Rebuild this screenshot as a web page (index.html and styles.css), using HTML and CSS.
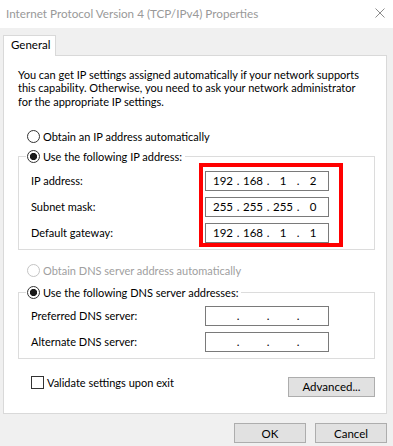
FILE: index.html
```html
<!DOCTYPE html>
<html>
<head>
<meta charset="utf-8">
<title>Internet Protocol Version 4 (TCP/IPv4) Properties</title>
<link rel="stylesheet" href="styles.css">
</head>
<body>
<div class="window">
  <header class="titlebar">
    <span class="title">Internet Protocol Version 4 (TCP/IPv4) Properties</span>
    <svg class="close" width="10" height="10" viewBox="0 0 10 10"><path d="M0.5 0.5L9.5 9.5M9.5 0.5L0.5 9.5" stroke="#8c8c8c" stroke-width="1" fill="none"/></svg>
  </header>
  <main class="content">
    <div class="tabs"><div class="tab">General</div></div>
    <section class="panel">
      <p class="intro">You can get IP settings assigned automatically if your network supports<br>this capability. Otherwise, you need to ask your network administrator<br>for the appropriate IP settings.</p>

      <div class="option"><span class="radio"></span><span>Obtain an IP address automatically</span></div>

      <fieldset class="group">
        <legend><span class="radio checked"></span><span>Use the following IP address:</span></legend>
        <div class="fields">
          <div class="row"><span class="label">IP address:</span>
            <div class="ipbox"><span class="oct">192</span><span class="dot">.</span><span class="oct">168</span><span class="dot">.</span><span class="oct">1</span><span class="dot">.</span><span class="oct">2</span></div></div>
          <div class="row"><span class="label">Subnet mask:</span>
            <div class="ipbox"><span class="oct">255</span><span class="dot">.</span><span class="oct">255</span><span class="dot">.</span><span class="oct">255</span><span class="dot">.</span><span class="oct">0</span></div></div>
          <div class="row"><span class="label">Default gateway:</span>
            <div class="ipbox"><span class="oct">192</span><span class="dot">.</span><span class="oct">168</span><span class="dot">.</span><span class="oct">1</span><span class="dot">.</span><span class="oct">1</span></div></div>
          <div class="highlight"></div>
        </div>
      </fieldset>

      <div class="option disabled"><span class="radio"></span><span>Obtain DNS server address automatically</span></div>

      <fieldset class="group dns">
        <legend><span class="radio checked"></span><span>Use the following DNS server addresses:</span></legend>
        <div class="fields">
          <div class="row"><span class="label">Preferred DNS server:</span>
            <div class="ipbox"><span class="oct"></span><span class="dot">.</span><span class="oct"></span><span class="dot">.</span><span class="oct"></span><span class="dot">.</span><span class="oct"></span></div></div>
          <div class="row"><span class="label">Alternate DNS server:</span>
            <div class="ipbox"><span class="oct"></span><span class="dot">.</span><span class="oct"></span><span class="dot">.</span><span class="oct"></span><span class="dot">.</span><span class="oct"></span></div></div>
        </div>
      </fieldset>

      <div class="bottom-row">
        <div class="check-row"><span class="checkbox"></span><span>Validate settings upon exit</span></div>
        <button class="btn advanced">Advanced...</button>
      </div>
    </section>
    <div class="dialog-buttons">
      <button class="btn dlg">OK</button>
      <button class="btn dlg">Cancel</button>
    </div>
  </main>
</div>
</body>
</html>
```
FILE: styles.css
```css
* { box-sizing: border-box; }
html, body { margin: 0; padding: 0; }
body {
  background: #f0f0f0;
  font-family: Lato, "Noto Sans", sans-serif;
  font-size: 11px;
  color: #000;
  width: 393px;
  height: 446px;
  overflow: hidden;
}
.titlebar {
  height: 28px;
  background: #fff;
  display: flex;
  align-items: center;
  justify-content: space-between;
  padding: 0 8px 3px 6px;
}
.title { color: #999; font-size: 11.7px; white-space: nowrap; }
.close { display: block; }

.content { padding-top: 7px; }
.tabs { display: flex; padding-left: 3px; }
.tab {
  width: 53px;
  height: 21px;
  border: 1px solid #d9d9d9;
  border-bottom: none;
  background: #fff;
  padding-left: 7px;
  font-size: 11.5px;
  line-height: 18px;
  margin-bottom: -1px;
  position: relative;
  z-index: 1;
}
.panel {
  margin-left: 3px;
  width: 384px;
  height: 359px;
  border: 1px solid #d9d9d9;
  background: #fff;
}
.intro {
  margin: 0;
  padding: 12px 0 0 14px;
  line-height: 13.33px;
  white-space: nowrap;
}
.option {
  display: flex;
  align-items: center;
  height: 16px;
  margin-left: 23px;
  white-space: nowrap;
}
.intro + .option { margin-top: 21px; }
.radio {
  display: inline-block;
  width: 13px;
  height: 13px;
  border: 1px solid #333;
  border-radius: 50%;
  background: #fff;
  margin-right: 3px;
  flex: none;
}
.radio.checked {
  background: radial-gradient(circle at center, #1a1a1a 0, #1a1a1a 3.3px, #fff 3.9px);
}
.option.disabled { color: #a0a0a0; margin-top: 13px; }
.option.disabled .radio { border-color: #c4c4c4; }

.group {
  margin: 4px 11px 0 14px;
  border: 1px solid #dcdcdc;
  padding: 6px 0 6px 12px;
  min-width: 0;
}
.group.dns { margin-top: 6px; padding-top: 5px; }
.group legend {
  display: flex;
  align-items: center;
  height: 16px;
  margin-left: -5px;
  padding: 0 3px 0 1px;
  white-space: nowrap;
}
.fields {
  display: flex;
  flex-direction: column;
  gap: 6px;
  position: relative;
}
.row { display: flex; align-items: center; height: 20px; }
.label { width: 174px; white-space: nowrap; }
.ipbox {
  width: 124px;
  height: 20px;
  border: 1px solid #7a7a7a;
  background: #fff;
  display: flex;
  align-items: center;
  padding-left: 4px;
  font-size: 11.5px;
}
.oct { width: 26px; text-align: center; }
.dot { width: 4px; text-align: center; }
.highlight {
  position: absolute;
  left: 168px;
  top: -8px;
  width: 144px;
  height: 84px;
  border: 4px solid #ff0000;
  pointer-events: none;
}

.bottom-row {
  display: flex;
  justify-content: space-between;
  align-items: flex-start;
  margin-top: 17px;
  padding: 0 11px 0 27px;
}
.check-row { display: flex; align-items: center; height: 13px; white-space: nowrap; }
.checkbox {
  width: 13px;
  height: 13px;
  border: 1px solid #333;
  background: #fff;
  margin-right: 3px;
  flex: none;
}
.btn {
  font: inherit;
  font-size: 11.5px;
  color: #000;
  background: #e1e1e1;
  border: 1px solid #adadad;
  height: 20px;
  padding: 0;
  margin: 0;
}
.advanced { width: 87px; margin-top: 1px; }
.dialog-buttons {
  display: flex;
  justify-content: flex-end;
  gap: 9px;
  padding-right: 6px;
  margin-top: 9px;
}
.dlg { width: 72px; }
```
